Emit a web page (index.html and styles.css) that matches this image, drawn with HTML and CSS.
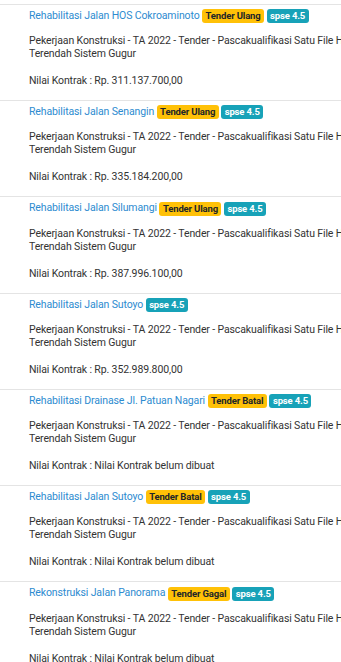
FILE: index.html
```html
<!DOCTYPE html>
<html lang="id">
<head>
    <meta charset="UTF-8">
    <meta name="viewport" content="width=device-width, initial-scale=1.0">
    <title>Daftar Tender</title>
    <link rel="stylesheet" href="styles.css">
</head>
<body>
    <main class="tender-list">
        <div class="tender-item">
            <div class="tender-title">
                <a href="#">Rehabilitasi Jalan HOS Cokroaminoto</a>
                <span class="badge badge-warning">Tender Ulang</span>
                <span class="badge badge-info">spse 4.5</span>
            </div>
            <p class="tender-desc">Pekerjaan Konstruksi - TA 2022 - Tender - Pascakualifikasi Satu File Harga Terendah Sistem Gugur</p>
            <p class="tender-value">Nilai Kontrak : Rp. 311.137.700,00</p>
        </div>

        <div class="tender-item">
            <div class="tender-title">
                <a href="#">Rehabilitasi Jalan Senangin</a>
                <span class="badge badge-warning">Tender Ulang</span>
                <span class="badge badge-info">spse 4.5</span>
            </div>
            <p class="tender-desc">Pekerjaan Konstruksi - TA 2022 - Tender - Pascakualifikasi Satu File Harga Terendah Sistem Gugur</p>
            <p class="tender-value">Nilai Kontrak : Rp. 335.184.200,00</p>
        </div>

        <div class="tender-item">
            <div class="tender-title">
                <a href="#">Rehabilitasi Jalan Silumangi</a>
                <span class="badge badge-warning">Tender Ulang</span>
                <span class="badge badge-info">spse 4.5</span>
            </div>
            <p class="tender-desc">Pekerjaan Konstruksi - TA 2022 - Tender - Pascakualifikasi Satu File Harga Terendah Sistem Gugur</p>
            <p class="tender-value">Nilai Kontrak : Rp. 387.996.100,00</p>
        </div>

        <div class="tender-item">
            <div class="tender-title">
                <a href="#">Rehabilitasi Jalan Sutoyo</a>
                <span class="badge badge-info">spse 4.5</span>
            </div>
            <p class="tender-desc">Pekerjaan Konstruksi - TA 2022 - Tender - Pascakualifikasi Satu File Harga Terendah Sistem Gugur</p>
            <p class="tender-value">Nilai Kontrak : Rp. 352.989.800,00</p>
        </div>

        <div class="tender-item">
            <div class="tender-title">
                <a href="#">Rehabilitasi Drainase Jl. Patuan Nagari</a>
                <span class="badge badge-warning">Tender Batal</span>
                <span class="badge badge-info">spse 4.5</span>
            </div>
            <p class="tender-desc">Pekerjaan Konstruksi - TA 2022 - Tender - Pascakualifikasi Satu File Harga Terendah Sistem Gugur</p>
            <p class="tender-value">Nilai Kontrak : Nilai Kontrak belum dibuat</p>
        </div>

        <div class="tender-item">
            <div class="tender-title">
                <a href="#">Rehabilitasi Jalan Sutoyo</a>
                <span class="badge badge-warning">Tender Batal</span>
                <span class="badge badge-info">spse 4.5</span>
            </div>
            <p class="tender-desc">Pekerjaan Konstruksi - TA 2022 - Tender - Pascakualifikasi Satu File Harga Terendah Sistem Gugur</p>
            <p class="tender-value">Nilai Kontrak : Nilai Kontrak belum dibuat</p>
        </div>

        <div class="tender-item">
            <div class="tender-title">
                <a href="#">Rekonstruksi Jalan Panorama</a>
                <span class="badge badge-warning">Tender Gagal</span>
                <span class="badge badge-info">spse 4.5</span>
            </div>
            <p class="tender-desc">Pekerjaan Konstruksi - TA 2022 - Tender - Pascakualifikasi Satu File Harga Terendah Sistem Gugur</p>
            <p class="tender-value">Nilai Kontrak : Nilai Kontrak belum dibuat</p>
        </div>
    </main>
</body>
</html>
```

FILE: styles.css
```css
body {
    font-family: Roboto, 'Liberation Sans', sans-serif;
    font-size: 10.5px;
    letter-spacing: -0.12px;
    color: #333;
    margin: 0;
    padding: 4px 0 0;
    background-color: #fff;
    overflow: hidden;
}

.tender-list {
    width: 400px;
}

.tender-item {
    border-top: 1px solid #e4e4e4;
    padding: 4px 15px 13px 29px;
}

.tender-title {
    line-height: 14px;
    white-space: nowrap;
}

.tender-title a {
    color: #2d8bd0;
    text-decoration: none;
}

.badge {
    display: inline-block;
    padding: 1px 3.5px;
    font-size: 9.5px;
    font-weight: 700;
    letter-spacing: -0.15px;
    line-height: 12px;
    border-radius: 3px;
    vertical-align: middle;
}

.badge-warning {
    background-color: #ffc107;
    color: #212529;
}

.badge-info {
    background-color: #17a2b8;
    color: #fff;
}

.tender-desc {
    margin: 11px 0 0;
    line-height: 13px;
}

.tender-value {
    margin: 14px 0 0;
    line-height: 13px;
}
```
